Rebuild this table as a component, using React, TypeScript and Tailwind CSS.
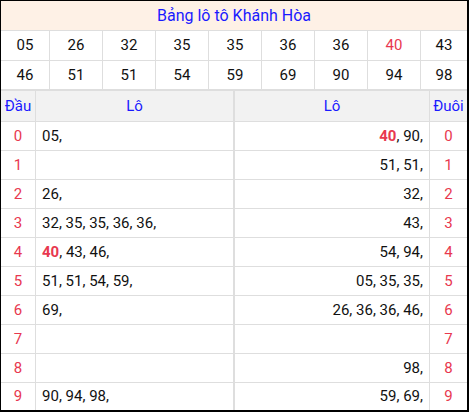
const top1 = ["05", "26", "32", "35", "35", "36", "36", "40", "43"];
const top2 = ["46", "51", "51", "54", "59", "69", "90", "94", "98"];

const dau: string[][] = [
  ["05"],
  [],
  ["26"],
  ["32", "35", "35", "36", "36"],
  ["40", "43", "46"],
  ["51", "51", "54", "59"],
  ["69"],
  [],
  [],
  ["90", "94", "98"],
];

const duoi: string[][] = [
  ["40", "90"],
  ["51", "51"],
  ["32"],
  ["43"],
  ["54", "94"],
  ["05", "35", "35"],
  ["26", "36", "36", "46"],
  [],
  ["98"],
  ["59", "69"],
];

function NumRow({ nums, last }: { nums: string[]; last?: boolean }) {
  return (
    <div
      className={`flex ${last ? "h-[30px] border-b-2" : "h-[30px] border-b"} border-[#dedede]`}
    >
      {nums.map((n, i) => (
        <div
          key={i}
          className={`flex items-center justify-center ${
            i === 0 ? "w-[49px] border-r" : i === 8 ? "flex-1" : "w-[53px] border-r"
          } border-[#dedede] ${n === "40" ? "text-[#e8384f]" : "text-[#111]"}`}
        >
          {n}
        </div>
      ))}
    </div>
  );
}

function Nums({ list }: { list: string[] }) {
  return (
    <span className="whitespace-pre">
      {list.map((n, i) => (
        <span key={i}>
          {n === "40" ? <b className="font-bold text-[#e8384f]">{n}</b> : n}
          {i < list.length - 1 ? ", " : ","}
        </span>
      ))}
    </span>
  );
}

export default function App() {
  return (
    <div className="h-[412px] w-[469px] overflow-hidden border-t border-l border-r-2 border-b-2 border-black bg-white font-['Roboto',sans-serif] text-[15px]">
      <div className="flex h-[30px] items-center justify-center border-b border-[#dedede] bg-[#fef1e6] text-[16px] text-[#1a1aff]">
        Bảng lô tô Khánh Hòa
      </div>
      <NumRow nums={top1} />
      <NumRow nums={top2} last />

      <div className="flex h-[31px] border-b border-[#dedede] bg-[#f2f2f2] text-[#1a1aff]">
        <div className="flex w-[35px] items-center justify-center border-r border-[#dedede]">Đầu</div>
        <div className="flex w-[199px] items-center justify-center border-r-2 border-[#dedede]">Lô</div>
        <div className="flex w-[195px] items-center justify-center border-r border-[#dedede]">Lô</div>
        <div className="flex flex-1 items-center justify-center">Đuôi</div>
      </div>

      {dau.map((row, i) => (
        <div
          key={i}
          className={`flex ${i === 9 ? "h-[27px]" : "h-[29px] border-b"} border-[#dedede] text-[#111]`}
        >
          <div className="flex w-[35px] items-center justify-center border-r border-[#dedede] text-[#e8384f]">
            {i}
          </div>
          <div className="flex w-[199px] items-center border-r-2 border-[#dedede] pl-[6px]">
            {row.length > 0 && <Nums list={row} />}
          </div>
          <div className="flex w-[195px] items-center justify-end border-r border-[#dedede] pr-[6px]">
            {duoi[i].length > 0 && <Nums list={duoi[i]} />}
          </div>
          <div className="flex flex-1 items-center justify-center text-[#e8384f]">{i}</div>
        </div>
      ))}
    </div>
  );
}
